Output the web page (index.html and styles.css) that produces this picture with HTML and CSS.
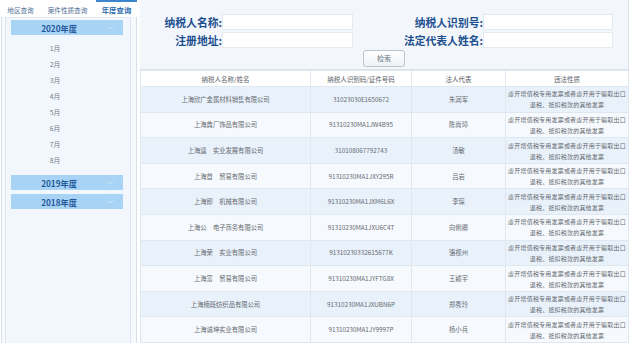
FILE: index.html
```html
<!DOCTYPE html>
<html lang="zh-CN">
<head>
<meta charset="utf-8">
<title>年度查询</title>
<link rel="stylesheet" href="styles.css">
</head>
<body>
<div class="page">
  <aside class="sidebar">
    <div class="tabs">
      <span class="tab">地区查询</span>
      <span class="tab">案件性质查询</span>
      <span class="tab active">年度查询</span>
    </div>
    <div class="panel-outer">
      <div class="panel">
        <div class="year first">2020年度<svg class="chev" viewBox="0 0 10 6" width="8" height="5"><path d="M1 1 L5 5 L9 1" fill="none" stroke="#d6ebfb" stroke-width="1"/></svg></div>
        <ul class="months">
          <li>1月</li><li>2月</li><li>3月</li><li>4月</li><li>5月</li><li>6月</li><li>7月</li><li>8月</li>
        </ul>
        <div class="year y2019">2019年度<svg class="chev" viewBox="0 0 10 6" width="8" height="5"><path d="M1 1 L5 5 L9 1" fill="none" stroke="#d6ebfb" stroke-width="1"/></svg></div>
        <div class="year y2018">2018年度<svg class="chev" viewBox="0 0 10 6" width="8" height="5"><path d="M1 1 L5 5 L9 1" fill="none" stroke="#d6ebfb" stroke-width="1"/></svg></div>
      </div>
    </div>
  </aside>
  <main class="main">
    <div class="search">
      <div class="fields">
        <label class="lbl">纳税人名称:</label><input class="inp" type="text">
        <label class="lbl">纳税人识别号:</label><input class="inp" type="text">
        <label class="lbl">注册地址:</label><input class="inp" type="text">
        <label class="lbl">法定代表人姓名:</label><input class="inp" type="text">
      </div>
      <div class="actions"><button class="btn">检索</button></div>
    </div>
    <table class="result">
      <colgroup><col class="c1"><col class="c2"><col class="c3"><col class="c4"></colgroup>
      <thead>
        <tr><th>纳税人名称/姓名</th><th>纳税人识别码/证件号码</th><th>法人代表</th><th>违法性质</th></tr>
      </thead>
      <tbody>
        <tr><td>上海欣广金属材料销售有限公司</td><td>31023030E1650672</td><td>朱润军</td><td class="nat">虚开增值税专用发票或者虚开用于骗取出口<br>退税、抵扣税款的其他发票</td></tr>
        <tr><td>上海典厂饰品有限公司</td><td>91310230MA1JW4B95</td><td>陈尚璋</td><td class="nat">虚开增值税专用发票或者虚开用于骗取出口<br>退税、抵扣税款的其他发票</td></tr>
        <tr><td>上海逵　实业发展有限公司</td><td>310108067792743</td><td>汤敏</td><td class="nat">虚开增值税专用发票或者虚开用于骗取出口<br>退税、抵扣税款的其他发票</td></tr>
        <tr><td>上海首　贸易有限公司</td><td>91310230MA1JXY295R</td><td>吕岩</td><td class="nat">虚开增值税专用发票或者虚开用于骗取出口<br>退税、抵扣税款的其他发票</td></tr>
        <tr><td>上海即　机械有限公司</td><td>91310230MA1JXM6L6X</td><td>李琛</td><td class="nat">虚开增值税专用发票或者虚开用于骗取出口<br>退税、抵扣税款的其他发票</td></tr>
        <tr><td>上海公　电子商务有限公司</td><td>91310230MA1JXU6C4T</td><td>向俐卿</td><td class="nat">虚开增值税专用发票或者虚开用于骗取出口<br>退税、抵扣税款的其他发票</td></tr>
        <tr><td>上海荣　实业有限公司</td><td>91310230332615677K</td><td>骆视州</td><td class="nat">虚开增值税专用发票或者虚开用于骗取出口<br>退税、抵扣税款的其他发票</td></tr>
        <tr><td>上海富　贸易有限公司</td><td>91310230MA1JYFTG8X</td><td>王颖宇</td><td class="nat">虚开增值税专用发票或者虚开用于骗取出口<br>退税、抵扣税款的其他发票</td></tr>
        <tr><td>上海楠既纺织品有限公司</td><td>91310230MA1JXUBN6P</td><td>郑秀玲</td><td class="nat">虚开增值税专用发票或者虚开用于骗取出口<br>退税、抵扣税款的其他发票</td></tr>
        <tr><td>上海诚坤实业有限公司</td><td>91310230MA1JY9997P</td><td>杨小兵</td><td class="nat">虚开增值税专用发票或者虚开用于骗取出口<br>退税、抵扣税款的其他发票</td></tr>
      </tbody>
    </table>
  </main>
</div>
</body>
</html>
```

FILE: styles.css
```css
* { box-sizing: border-box; }
html, body {
  margin: 0;
  padding: 0;
  background: #ffffff;
  font-family: "Noto Sans CJK SC", "Noto Sans", sans-serif;
  overflow: hidden;
}
.page {
  display: flex;
  width: 640px;
  height: 343px;
}

/* ---------- sidebar ---------- */
.sidebar {
  width: 137px;
  flex: none;
  display: flex;
  flex-direction: column;
}
.tabs {
  display: flex;
  height: 17px;
  align-items: stretch;
}
.tab {
  display: flex;
  align-items: center;
  justify-content: center;
  font-size: 6.6px;
  color: #4f6f96;
  border-top: 2px solid transparent;
}
.tab:nth-child(1) { width: 41px; }
.tab:nth-child(2) { width: 53px; }
.tab.active {
  width: 41px;
  margin-left: 2px;
  color: #2f6cae;
  font-weight: bold;
  font-size: 7.4px;
  border-top-color: #3f86cf;
}
.panel-outer {
  flex: 1;
  margin-left: 1px;
  border-left: 1px solid #d6dfea;
  border-right: 1px solid #d6dfea;
  padding: 0 5px 0 3px;
  background: #f7fafd;
}
.panel {
  height: 100%;
  border-left: 1px solid #dde6f0;
  border-right: 1px solid #dde6f0;
  border-top: 1px solid #e2eaf3;
  background: #f2f7fd;
  padding: 2px 7px 0 5px;
}
.year {
  position: relative;
  height: 15px;
  background: #a9d3f5;
  color: #22589a;
  font-weight: bold;
  font-size: 8.2px;
  display: flex;
  align-items: center;
  justify-content: center;
  padding-right: 16px;
}
.chev {
  position: absolute;
  right: 9px;
  top: 5px;
}
.months {
  list-style: none;
  margin: 5px 0 0 0;
  padding: 0 24px 0 0;
}
.months li {
  height: 16px;
  display: flex;
  align-items: center;
  justify-content: center;
  font-size: 6.8px;
  color: #6f7b88;
}
.y2019 { margin-top: 7px; }
.y2018 { margin-top: 4px; }

/* ---------- main ---------- */
.main {
  flex: 1;
  padding-left: 3px;
  padding-right: 12px;
  display: flex;
  flex-direction: column;
}
.search {
  background: #f3f7fc;
  border-right: 1px solid #dbe3ec;
  border-bottom: 1px solid #dbe3ec;
  height: 72px;
  padding-top: 14px;
}
.fields {
  display: grid;
  grid-template-columns: 82px 131px 130px 130px;
  grid-auto-rows: 16px;
  row-gap: 2px;
  align-items: center;
}
.lbl {
  text-align: right;
  font-size: 10.8px;
  font-weight: bold;
  color: #1d4f8e;
  line-height: 16px;
  white-space: nowrap;
}
.inp {
  height: 16px;
  border: 1px solid #e4eaf1;
  background: #ffffff;
  margin: 0;
  padding: 0;
  outline: none;
}
.actions {
  display: flex;
  padding-left: 223px;
  margin-top: 2px;
}
.btn {
  width: 42px;
  height: 17px;
  padding: 0;
  font-family: inherit;
  font-size: 7px;
  line-height: 15px;
  color: #6a7684;
  background: linear-gradient(#ffffff, #eef2f6);
  border: 1px solid #b9c5d2;
  border-radius: 3px;
}

.result {
  border-collapse: collapse;
  table-layout: fixed;
  width: 488px;
}
.c1 { width: 170px; }
.c2 { width: 101px; }
.c3 { width: 94px; }
.c4 { width: 123px; }
.result th, .result td {
  border: 1px solid #dfe7f0;
  text-align: center;
  font-weight: normal;
  color: #666b72;
  font-size: 6.3px;
  padding: 0;
  white-space: nowrap;
  overflow: hidden;
}
.result th {
  height: 16px;
  background: #ffffff;
  color: #5b6168;
  font-size: 6.5px;
}
.result td {
  height: 25.6px;
  line-height: 11px;
}
.result td.nat {
  font-size: 6px;
  letter-spacing: 0.2px;
}
.result tbody tr:nth-child(odd) td { background: #e9f1fa; }
.result tbody tr:nth-child(even) td { background: #f6f9fd; }
```
